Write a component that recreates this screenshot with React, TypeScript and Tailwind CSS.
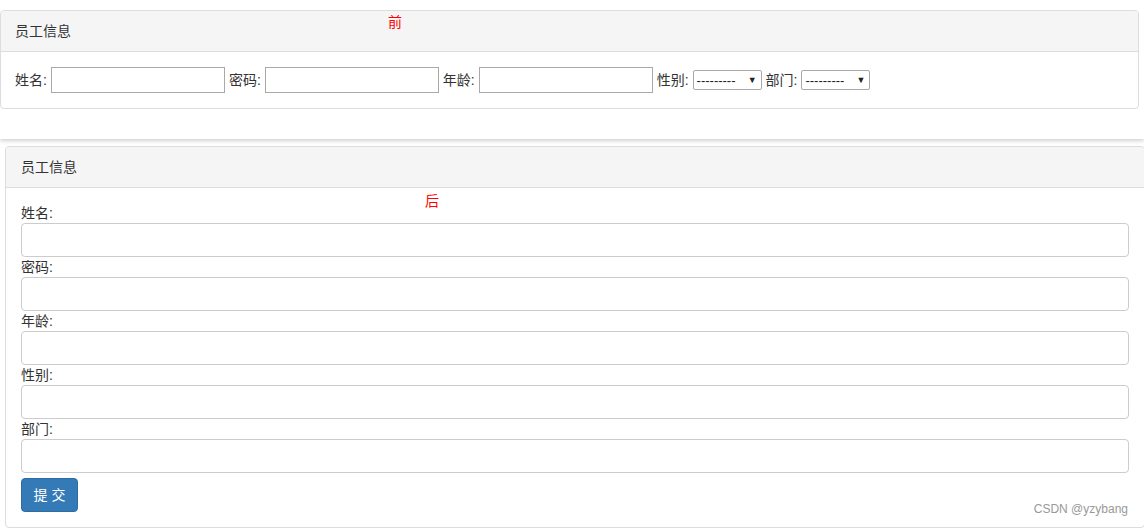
const font = { fontFamily: '"Liberation Sans", "Noto Sans CJK SC", sans-serif' }

const FakeSelect = () => (
  <div className="flex items-center justify-between h-[20px] w-[69px] border border-[#a9a9a9] rounded-[2px] bg-white pl-[3px] pr-[4px] text-[13px] text-[#222]">
    <span className="leading-none">---------</span>
    <span className="text-[9px] leading-none">▼</span>
  </div>
)

const Field = ({ label }: { label: string }) => (
  <div className="flex flex-col">
    <label className="h-[20px] leading-[20px] text-[14px] text-[#333]">{label}:</label>
    <input type="text" className="h-[34px] w-full border border-[#ccc] rounded-[4px] bg-white px-3 focus:outline-none" />
  </div>
)

export default function App() {
  return (
    <div className="w-[1144px] h-[530px] overflow-hidden bg-white text-[#333]" style={font}>
      {/* before */}
      <div className="h-[139px] pt-[10px] bg-white shadow-[0_2px_4px_rgba(0,0,0,0.18)] relative">
        <div className="w-[1139px] border border-[#ddd] rounded-[4px] overflow-hidden">
          <div className="h-[41px] bg-[#f5f5f5] border-b border-[#ddd] flex items-center px-[14px] text-[14px] relative">
            员工信息
            <span className="absolute left-[387px] top-[1px] text-[14px] text-[#f00]">前</span>
          </div>
          <div className="h-[56px] px-[14px] flex items-center text-[14px]">
            <span>姓名:</span>
            <input type="text" className="ml-[4px] mr-[4px] h-[26px] w-[174px] border border-[#a9a9a9] focus:outline-none" />
            <span>密码:</span>
            <input type="text" className="ml-[4px] mr-[4px] h-[26px] w-[174px] border border-[#a9a9a9] focus:outline-none" />
            <span>年龄:</span>
            <input type="text" className="ml-[4px] mr-[4px] h-[26px] w-[174px] border border-[#a9a9a9] focus:outline-none" />
            <span>性别:</span>
            <div className="ml-[4px] mr-[4px]"><FakeSelect /></div>
            <span>部门:</span>
            <div className="ml-[4px]"><FakeSelect /></div>
          </div>
        </div>
      </div>

      {/* after */}
      <div className="mt-[7px] ml-[5px] w-[1140px] border border-[#ddd] rounded-[4px] overflow-hidden">
        <div className="h-[41px] bg-[#f5f5f5] border-b border-[#ddd] flex items-center px-[15px] text-[14px]">员工信息</div>
        <div className="relative px-[15px] pt-[15px] pb-[15px]">
          <span className="absolute left-[419px] top-[3px] text-[14px] text-[#f00]">后</span>
          <div className="flex flex-col">
            <Field label="姓名" />
            <Field label="密码" />
            <Field label="年龄" />
            <Field label="性别" />
            <Field label="部门" />
          </div>
          <div className="mt-[5px] flex items-end justify-between">
            <button className="h-[34px] w-[57px] bg-[#337ab7] border border-[#2e6da4] rounded-[4px] text-white text-[14px]">提 交</button>
            <span className="text-[12px] text-[#999] mb-[-6px] mr-[1px]">CSDN @yzybang</span>
          </div>
        </div>
      </div>
    </div>
  )
}
